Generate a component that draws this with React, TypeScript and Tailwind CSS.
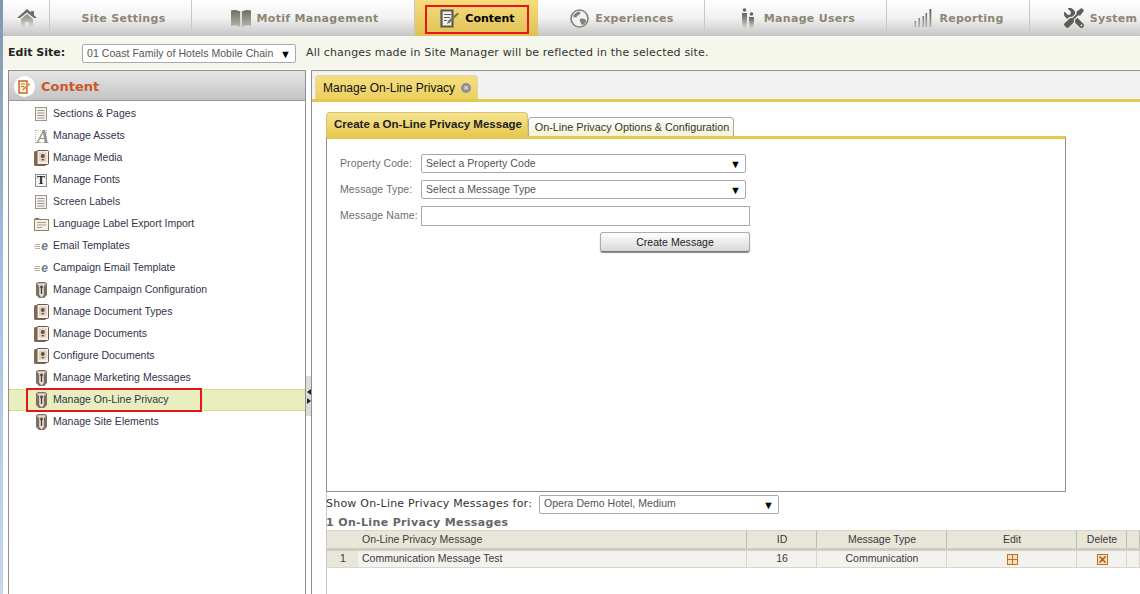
import type { ReactNode } from "react";
import { FaTools } from "react-icons/fa";

const SANS = "font-['Liberation_Sans',Arial,sans-serif]";
const WIDE = "font-['DejaVu_Sans',Verdana,sans-serif]";

function Fade({ id, from, to }: { id: string; from: string; to: string }) {
  return (
    <defs>
      <linearGradient id={id} x1="0" y1="0" x2="0" y2="1">
        <stop offset="0" stopColor={from} />
        <stop offset="1" stopColor={to} />
      </linearGradient>
    </defs>
  );
}

function HomeIcon() {
  return (
    <svg width="20" height="19" viewBox="0 0 20 19">
      <Fade id="home" from="#8a877f" to="#e2e0da" />
      <path d="M10 0 0 9h3l7-5.500L17 9h3l-3-2.800V2h-3v1.500z" fill="#6f6c64" />
      <path d="M4 10l6-5 6 5v9h-4v-6H8v6H4z" fill="url(#home)" />
    </svg>
  );
}

function BookIcon() {
  return (
    <svg width="20" height="17" viewBox="0 0 20 17">
      <Fade id="book" from="#6f6c64" to="#b9b6ae" />
      <path d="M0 0.500c3-.8 6-.8 9.200 1V17C6 15.300 3 15.300 0 16z" fill="url(#book)" />
      <path d="M20 0.500c-3-.8-6-.8-9.200 1V17c3.200-1.700 6.200-1.700 9.200-1z" fill="url(#book)" />
    </svg>
  );
}

function ContentIcon() {
  return (
    <svg width="20" height="19" viewBox="0 0 20 19">
      <path d="M1.500 1.500h11v16h-11z" fill="#f1f1ec" stroke="#5c5a52" strokeWidth="2.200" />
      <path d="M4 5.500h7M4 8.500h6M4 11.500h3" stroke="#5c5a52" strokeWidth="1.200" />
      <path d="M7 15l1-3 9.500-8.500 1.500 1.500-9 8.500z" fill="#7a7456" />
    </svg>
  );
}

function GlobeIcon() {
  return (
    <svg width="19" height="19" viewBox="0 0 19 19">
      <circle cx="9.500" cy="9.500" r="8.500" fill="#f1f1f1" stroke="#85827a" strokeWidth="1.600" />
      <path d="M3 7c2-3 5-5 7-4 1 2-1 3-3 4 0 2-2 2-4 0zM10 10c3-1 6 0 6 2-1 3-3 4-4 4-1-2-3-4-2-6z" fill="#85827a" />
    </svg>
  );
}

function UsersIcon() {
  return (
    <svg width="14" height="20" viewBox="0 0 14 20">
      <Fade id="users" from="#66635c" to="#d2d0ca" />
      <circle cx="3.500" cy="2" r="1.800" fill="#66635c" />
      <path d="M1 5h5v7l-.7 8H2l-1-8z" fill="url(#users)" />
      <circle cx="10.500" cy="6" r="1.800" fill="#66635c" />
      <path d="M8 9h5v4l-.8 7H9l-1-7z" fill="url(#users)" />
    </svg>
  );
}

function ChartIcon() {
  return (
    <svg width="18" height="18" viewBox="0 0 18 18">
      <Fade id="bars" from="#55524b" to="#b4b2ac" />
      <path d="M0.500 12h1.600v6H.5zM4.500 9h1.600v9H4.500zM8.500 7h1.600v11H8.500zM11.500 4h1.600v14h-1.600zM15.500 0h1.800v18h-1.800z" fill="url(#bars)" />
    </svg>
  );
}

function PageIcon() {
  return (
    <svg width="12" height="14" viewBox="0 0 12 14">
      <rect x="0.500" y="0.500" width="11" height="13" fill="#f4f1ec" stroke="#9c9488" />
      <path d="M2.500 3.500h7M2.500 6h7M2.500 8.500h7M2.500 11h7" stroke="#9c9488" />
    </svg>
  );
}

function AssetIcon() {
  return (
    <span className="relative block h-[13px] w-[12px] border border-dotted border-[#bbb]">
      <span className="absolute -top-[3px] left-[1px] font-['Liberation_Serif',serif] text-[18px] font-bold italic leading-[18px] text-[#95918a]">A</span>
    </span>
  );
}

function MediaIcon() {
  return (
    <svg width="15" height="16" viewBox="0 0 15 16">
      <rect x="0" y="1" width="12" height="15" rx="1.500" fill="#8a6650" />
      <rect x="3" y="0.500" width="11.500" height="14" rx="1" fill="#f3efe9" stroke="#6d5a4e" />
      <rect x="5" y="2.500" width="7.500" height="9" fill="#d8cfc4" />
      <circle cx="8.800" cy="6" r="1.900" fill="#7c4a22" />
      <path d="M7.300 9h3l-1.500 2z" fill="#5b5048" />
    </svg>
  );
}

function FontIcon() {
  return (
    <span className="flex h-[13px] w-[12px] items-center justify-center border border-[#8f8f8f] bg-[#f4f4f0] font-['Liberation_Serif',serif] text-[12px] font-bold leading-none text-[#222]">T</span>
  );
}

function LabelIcon() {
  return (
    <svg width="15" height="14" viewBox="0 0 15 14">
      <path d="M1 3V1.500h4l1 1h8V3" fill="none" stroke="#7d6a58" />
      <rect x="0.500" y="2.500" width="14" height="11" fill="#f5efe6" stroke="#98806a" />
      <path d="M3 5.500h9M3 8h9M3 10.500h5" stroke="#ab9b8c" />
    </svg>
  );
}

function EmailIcon() {
  return (
    <span className="flex items-center gap-[1px]">
      <svg width="6" height="7" viewBox="0 0 6 7">
        <path d="M1 1.500h5M0 3.500h6M1 5.500h5" stroke="#b0b0b0" />
      </svg>
      <span className={`${SANS} text-[12px] font-bold italic leading-none text-[#6f7c88]`}>e</span>
    </span>
  );
}

function PillarIcon() {
  return (
    <svg width="13" height="16" viewBox="0 0 13 16">
      <path d="M1 1.500 3 0h7l2 1.500V13l-3 3H4l-3-3z" fill="#7d6e62" />
      <path d="M2.500 1.200h8V3.500h-8z" fill="#d9d2ca" />
      <path d="M4.200 2.500h4.600V13l-2.300 2.500L4.200 13z" fill="#e6e1da" />
      <circle cx="6.500" cy="5" r="1.400" fill="#4f4036" />
      <path d="M5.800 5h1.400v7H5.800z" fill="#4f4036" />
    </svg>
  );
}

const NAV_TABS: { label: string; icon: ReactNode; width: string; gap: string }[] = [
  { label: "Site Settings", icon: null, width: "w-[142px] pl-[6px]", gap: "" },
  { label: "Motif Management", icon: <BookIcon />, width: "w-[223px] pl-[3px]", gap: "gap-[6px]" },
];

const NAV_TABS_RIGHT: { label: string; icon: ReactNode; width: string; gap: string }[] = [
  { label: "Experiences", icon: <GlobeIcon />, width: "w-[167px] pl-[2px]", gap: "gap-[6px]" },
  { label: "Manage Users", icon: <UsersIcon />, width: "w-[182px] pl-[5px]", gap: "gap-[9px]" },
  { label: "Reporting", icon: <ChartIcon />, width: "w-[143px] pl-[2px]", gap: "gap-[7px]" },
  { label: "System", icon: <FaTools size={20} color="#5f5c55" className="-scale-x-100" />, width: "w-[142px]", gap: "gap-[6px]" },
];

const MENU_ITEMS: { label: string; icon: ReactNode }[] = [
  { label: "Sections & Pages", icon: <PageIcon /> },
  { label: "Manage Assets", icon: <AssetIcon /> },
  { label: "Manage Media", icon: <MediaIcon /> },
  { label: "Manage Fonts", icon: <FontIcon /> },
  { label: "Screen Labels", icon: <PageIcon /> },
  { label: "Language Label Export Import", icon: <LabelIcon /> },
  { label: "Email Templates", icon: <EmailIcon /> },
  { label: "Campaign Email Template", icon: <EmailIcon /> },
  { label: "Manage Campaign Configuration", icon: <PillarIcon /> },
  { label: "Manage Document Types", icon: <MediaIcon /> },
  { label: "Manage Documents", icon: <MediaIcon /> },
  { label: "Configure Documents", icon: <MediaIcon /> },
  { label: "Manage Marketing Messages", icon: <PillarIcon /> },
  { label: "Manage On-Line Privacy", icon: <PillarIcon /> },
  { label: "Manage Site Elements", icon: <PillarIcon /> },
];

function NavTab({ label, icon, width, gap }: { label: string; icon: ReactNode; width: string; gap: string }) {
  return (
    <div className={`flex h-full shrink-0 items-center justify-center border-r border-[#c6c8d0] ${width} ${gap}`}>
      {icon}
      <span className={`${WIDE} pt-[2px] text-[11px] font-bold tracking-[0.3px] text-[#8c8672]`}>{label}</span>
    </div>
  );
}

function Select({ text, className }: { text: string; className: string }) {
  return (
    <div className={`flex h-[19px] shrink-0 items-center justify-between rounded-[2px] border border-[#a9a9a9] bg-white pl-[4px] pr-[4px] ${className}`}>
      <span className={`${SANS} text-[10.500px] tracking-[0.05px] text-[#555]`}>{text}</span>
      <span className="text-[11px] leading-none text-black">▼</span>
    </div>
  );
}

function FormRow({ label, children }: { label: string; children: ReactNode }) {
  return (
    <div className="flex items-center">
      <span className={`${SANS} w-[81px] shrink-0 text-[10.500px] tracking-[0.1px] text-[#6f6f6f]`}>{label}</span>
      {children}
    </div>
  );
}

function EditIcon() {
  return (
    <span className="ml-[1px] grid h-[11px] w-[11px] grid-cols-2 gap-[1px] border border-[#c0701f] bg-[#c0701f]">
      <span className="bg-[#f5e0c0]" />
      <span className="bg-[#f5e0c0]" />
      <span className="bg-[#f5e0c0]" />
      <span className="bg-[#f5e0c0]" />
    </span>
  );
}

function DeleteIcon() {
  return (
    <svg width="11" height="11" viewBox="0 0 11 11">
      <rect x="0.500" y="0.500" width="10" height="10" fill="#f5dfc4" stroke="#c0701f" />
      <path d="M2.500 2.500l6 6M8.500 2.500l-6 6" stroke="#a85c14" strokeWidth="1.600" />
    </svg>
  );
}

function TableRow({ cells, head }: { cells: ReactNode[]; head?: boolean }) {
  const widths = ["w-[31px]", "w-[389px]", "w-[70px]", "w-[130px]", "w-[130px]", "w-[50px]", "flex-1"];
  const line = head ? "border-[#bdbcb0]" : "border-[#d8d6ce]";
  return (
    <div className={`flex h-[17px] ${head ? "bg-[#e8e6d8]" : "border-b border-[#d8d6ce] bg-[#f4f2ee]"}`}>
      {cells.map((cell, i) => (
        <div
          key={i}
          className={`${SANS} flex items-center text-[10.500px] text-[#3a3a3a] ${widths[i]} ${i === 0 ? `justify-center ${head ? "" : "bg-[#e8e6d8]"}` : `border-r ${line}`} ${i === 1 ? "px-[4px]" : "justify-center pl-[1px]"}`}
        >
          {cell}
        </div>
      ))}
    </div>
  );
}

export default function App() {
  return (
    <div className="flex h-[594px] w-[1140px] overflow-hidden bg-white">
      {/* window edge */}
      <div className="w-[3px] shrink-0 bg-gradient-to-b from-[#7f97b0] via-[#a7c4e6] to-[#c4d8ee]" />

      <div className="flex min-w-0 flex-1 flex-col">
        {/* Top nav */}
        <div className="flex h-[36px] shrink-0 bg-gradient-to-b from-white via-[#f1f1f1] to-[#c6c6c6]">
          <div className="flex h-full w-[47px] shrink-0 items-center justify-center border-r border-[#c6c8d0] pl-[2px]">
            <HomeIcon />
          </div>
          {NAV_TABS.map((t) => (
            <NavTab key={t.label} {...t} />
          ))}
          <div className="relative flex h-full w-[123px] shrink-0 items-center justify-center gap-[5px] bg-gradient-to-b from-[#f6dd7c] to-[#dfc054] pl-[2px]">
            <ContentIcon />
            <span className={`${WIDE} pt-[2px] text-[11px] font-bold text-black`}>Content</span>
            <span className="absolute bottom-[2px] left-[10px] top-[5px] w-[104px] border-2 border-[#e8141c]" />
          </div>
          {NAV_TABS_RIGHT.map((t) => (
            <NavTab key={t.label} {...t} />
          ))}
        </div>

        {/* Edit site bar */}
        <div className="flex h-[34px] shrink-0 items-center border-b border-white bg-[#f6f7ec] pl-[5px] pt-[2px]">
          <span className={`${WIDE} w-[74px] text-[11px] font-bold text-[#222]`}>Edit Site:</span>
          <Select text="01 Coast Family of Hotels Mobile Chain" className="w-[214px]" />
          <span className={`${WIDE} ml-[10px] text-[11px] tracking-[0.16px] text-[#333]`}>All changes made in Site Manager will be reflected in the selected site.</span>
        </div>

        <div className="flex min-h-0 flex-1 pl-[5px]">
          {/* Left panel */}
          <div className="flex w-[298px] shrink-0 flex-col border-x border-t border-[#8f8f8f]">
            <div className="flex h-[30px] shrink-0 items-center gap-[6px] border-b border-[#9a9a9a] bg-gradient-to-b from-[#e6e6e6] to-[#c4c4c4] pl-[5px] pt-[2px]">
              <span className="flex h-[21px] w-[21px] items-center justify-center rounded-full bg-white">
                <svg width="13" height="14" viewBox="0 0 13 14">
                  <path d="M1 1h8v12H1z" fill="#fff4e4" stroke="#c8662a" strokeWidth="1.500" />
                  <path d="M3 4h4M3 6.500h3" stroke="#c8662a" />
                  <path d="M4 11l1-3 6-5 1.500 1.500-6 5z" fill="#d89a3a" />
                </svg>
              </span>
              <span className={`${WIDE} text-[13px] font-bold text-[#c95a28]`}>Content</span>
            </div>
            <div className="flex flex-col pt-[2px]">
              {MENU_ITEMS.map((item) => {
                const active = item.label === "Manage On-Line Privacy";
                return (
                  <div
                    key={item.label}
                    className={`relative flex h-[22px] items-center ${active ? "border-y border-dotted border-[#d8c860] bg-[#e8eebe]" : ""}`}
                  >
                    <span className="flex w-[44px] shrink-0 justify-center pl-[20px]">{item.icon}</span>
                    <span className={`${SANS} text-[10.500px] text-[#33334a]`}>{item.label}</span>
                    {active && <span className="absolute -bottom-[2px] -top-[2px] left-[17px] w-[176px] border-2 border-[#e8141c]" />}
                  </div>
                );
              })}
            </div>
          </div>

          {/* Splitter */}
          <div className="flex w-[6px] shrink-0 flex-col border-r border-[#8f8f8f]">
            <div className="mt-[306px] flex h-[40px] flex-col items-center justify-center gap-[3px] bg-[#dcdcdc]">
              <svg width="4" height="6" viewBox="0 0 4 6">
                <path d="M4 0v6L0 3z" fill="#222" />
              </svg>
              <svg width="4" height="6" viewBox="0 0 4 6">
                <path d="M0 0v6l4-3z" fill="#222" />
              </svg>
            </div>
          </div>

          {/* Right panel */}
          <div className="flex min-w-0 flex-1 flex-col">
            <div className="flex h-[29px] shrink-0 items-end border-t border-[#8f8f8f] bg-[#f2f2f2] pl-[3px]">
              <div className="flex h-[24px] w-[163px] items-center gap-[6px] rounded-t-[4px] border border-b-0 border-[#e0d9a8] bg-gradient-to-b from-[#f4de80] to-[#ecd060] pl-[7px]">
                <span className={`${SANS} text-[12px] text-[#111]`}>Manage On-Line Privacy</span>
                <span className="flex h-[10px] w-[10px] items-center justify-center rounded-full bg-[#8f8f8f] text-[9px] leading-none text-white">×</span>
              </div>
            </div>
            <div className="h-[3px] shrink-0 bg-[#e5c850]" />

            <div className="flex min-h-0 flex-1 flex-col pl-[14px]">
              {/* Sub tabs */}
              <div className="mt-[10px] flex h-[24px] shrink-0 items-end">
                <div className="flex h-[24px] w-[202px] items-center justify-center rounded-t-[4px] border border-b-0 border-[#d8c468] bg-gradient-to-b from-[#f6e490] to-[#e8c850] pl-[2px]">
                  <span className={`${SANS} text-[11.500px] font-bold text-[#222]`}>Create a On-Line Privacy Message</span>
                </div>
                <div className="flex h-[19px] w-[206px] items-center justify-center rounded-t-[4px] border border-b-0 border-[#a9a9a9] bg-gradient-to-b from-white to-[#f6f2d4] pl-[2px] pt-[1px]">
                  <span className={`${SANS} text-[10.800px] text-[#333]`}>On-Line Privacy Options & Configuration</span>
                </div>
              </div>

              {/* Form box */}
              <div className="flex h-[356px] w-[740px] shrink-0 flex-col border-x border-b border-t-[3px] border-[#8f8f8f] border-t-[#e5c850] pl-[13px] pr-[315px] pt-[15px]">
                <div className="flex flex-col gap-[7px]">
                  <FormRow label="Property Code:">
                    <Select text="Select a Property Code" className="w-[325px]" />
                  </FormRow>
                  <FormRow label="Message Type:">
                    <Select text="Select a Message Type" className="w-[325px]" />
                  </FormRow>
                  <FormRow label="Message Name:">
                    <div className="h-[20px] w-[329px] shrink-0 border border-[#a9a9a9] bg-white" />
                  </FormRow>
                </div>
                <div className={`${SANS} ml-[260px] mt-[6px] flex h-[20px] w-[150px] shrink-0 items-center justify-center rounded-[3px] border border-[#aaa] border-b-[#777] bg-gradient-to-b from-white to-[#d8d8d8] pt-[1px] text-[10.500px] tracking-[0.05px] text-[#222] shadow-[0_1px_1px_#888]`}>
                  Create Message
                </div>
              </div>

              {/* Messages */}
              <div className="flex min-h-0 flex-1 flex-col border-l border-[#c8c8c8]">
                <div className="mt-[3px] flex h-[18px] shrink-0 items-center">
                  <span className={`${WIDE} -ml-[1px] w-[213px] shrink-0 text-[11px] tracking-[0.22px] text-[#333]`}>Show On-Line Privacy Messages for:</span>
                  <Select text="Opera Demo Hotel, Medium" className="w-[240px]" />
                </div>
                <div className={`${WIDE} -ml-[1px] mt-[2px] h-[15px] text-[11px] font-bold leading-[15px] tracking-[0.35px] text-[#666]`}>1 On-Line Privacy Messages</div>
                <div className="border-t border-[#d8d6cc]">
                  <TableRow head cells={["", "On-Line Privacy Message", "ID", "Message Type", "Edit", "Delete", ""]} />
                  <div className="h-[3px] bg-[#cfcdc2]" />
                  <TableRow cells={["1", "Communication Message Test", "16", "Communication", <EditIcon />, <DeleteIcon />, ""]} />
                </div>
              </div>
            </div>
          </div>
        </div>
      </div>
    </div>
  );
}
